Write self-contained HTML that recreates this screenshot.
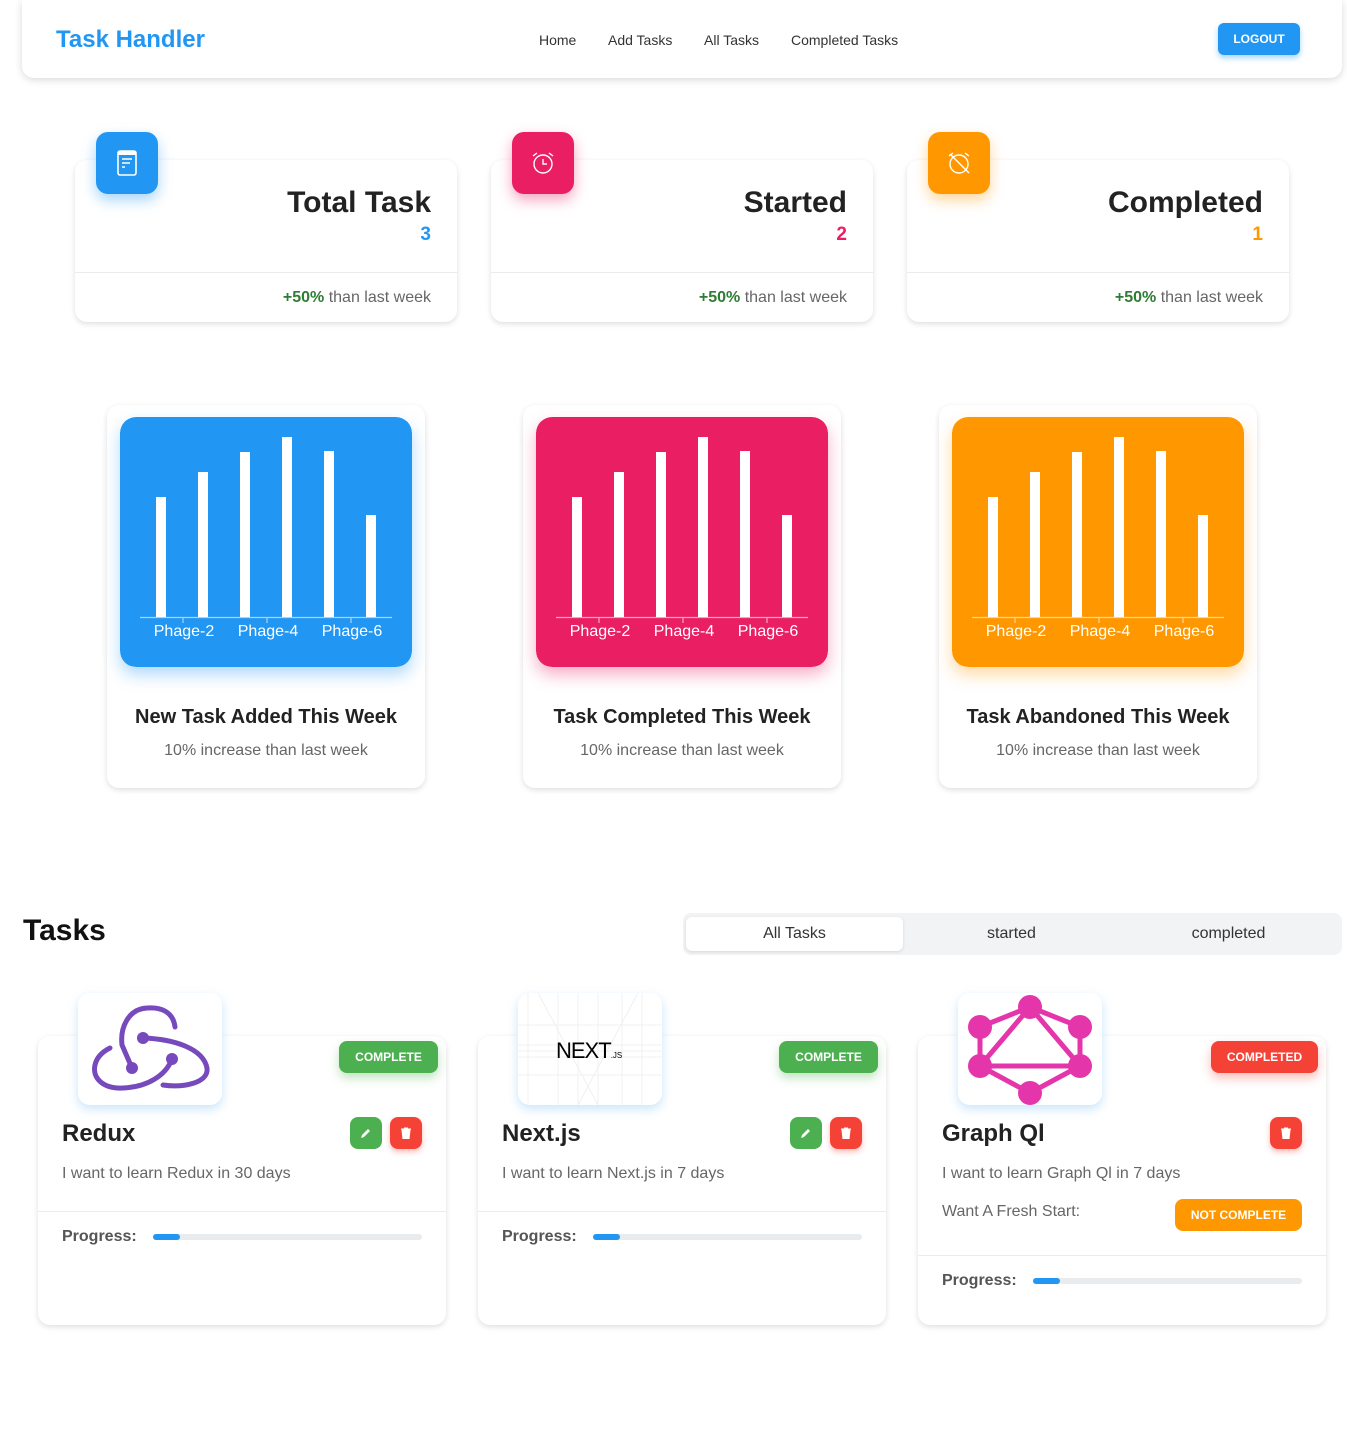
<!DOCTYPE html>
<html><head><meta charset="utf-8"><style>
*{box-sizing:border-box;margin:0;padding:0}
body{width:1347px;height:1449px;background:#fff;font-family:"Liberation Sans",Arial,sans-serif;position:relative;overflow:hidden;color:#222}
.a{position:absolute}
.nav{left:22px;top:0;width:1320px;height:78px;border-radius:0 0 12px 12px;box-shadow:0 2px 8px rgba(0,0,0,.15)}
.card{background:#fff;border-radius:12px;box-shadow:0 2px 6px rgba(0,0,0,.13)}
.ic{width:62px;height:62px;border-radius:12px;display:flex;align-items:center;justify-content:center}
.st{right:26px;font-size:30px;font-weight:bold;color:#222}
.hr{height:1px;background:#e9ecef;left:0;right:0}
.badge{color:#fff;font-size:12px;font-weight:bold;border-radius:8px;text-align:center;line-height:32px}
.btn{width:32px;height:32px;border-radius:8px;display:flex;align-items:center;justify-content:center}
</style></head><body>
<div class="a nav" style="background:#fff">
 <div class="a" style="left:34px;top:26px;font-size:24px;font-weight:bold;color:#2196f3">Task Handler</div>
 <div class="a" style="left:517px;top:32px;font-size:14px;color:#333">Home</div>
 <div class="a" style="left:586px;top:32px;font-size:14px;color:#333">Add Tasks</div>
 <div class="a" style="left:682px;top:32px;font-size:14px;color:#333">All Tasks</div>
 <div class="a" style="left:769px;top:32px;font-size:14px;color:#333">Completed Tasks</div>
 <div class="a" style="left:1196px;top:23px;width:82px;height:32px;background:#2196f3;border-radius:6px;color:#fff;font-size:12px;font-weight:bold;text-align:center;line-height:32px;box-shadow:0 3px 6px rgba(33,150,243,.4)">LOGOUT</div>
</div>

<div class="a card" style="left:75px;top:160px;width:382px;height:162px">
 <div class="a st" style="top:26px">Total Task</div>
 <div class="a" style="right:26px;top:64px;font-size:19px;font-weight:bold;color:#2196f3">3</div>
 <div class="a hr" style="top:112px"></div>
 <div class="a" style="right:26px;top:129px;font-size:16px;color:#666"><b style="color:#2e7d32">+50%</b> than last week</div>
</div>
<div class="a ic" style="left:96px;top:132px;background:#2196f3;box-shadow:0 6px 14px rgba(33,150,243,.4)">
 <svg width="22" height="26" viewBox="0 0 22 26"><rect x="2" y="1" width="18" height="24" rx="2" fill="none" stroke="#fff" stroke-width="1.6"/><rect x="2" y="1" width="18" height="4" fill="#fff"/><path d="M6 9h10M6 13h8M6 17h3" stroke="#fff" stroke-width="1.6"/></svg>
</div>
<div class="a card" style="left:491px;top:160px;width:382px;height:162px">
 <div class="a st" style="top:26px">Started</div>
 <div class="a" style="right:26px;top:64px;font-size:19px;font-weight:bold;color:#e91e63">2</div>
 <div class="a hr" style="top:112px"></div>
 <div class="a" style="right:26px;top:129px;font-size:16px;color:#666"><b style="color:#2e7d32">+50%</b> than last week</div>
</div>
<div class="a ic" style="left:512px;top:132px;background:#e91e63;box-shadow:0 6px 14px rgba(233,30,99,.4)">
 <svg width="26" height="26" viewBox="0 0 26 26" fill="none" stroke="#fff" stroke-width="1.4"><circle cx="13" cy="14" r="9"/><path d="M13 9v5h4M3 6l4-3M23 6l-4-3"/></svg>
</div>
<div class="a card" style="left:907px;top:160px;width:382px;height:162px">
 <div class="a st" style="top:26px">Completed</div>
 <div class="a" style="right:26px;top:64px;font-size:19px;font-weight:bold;color:#ff9800">1</div>
 <div class="a hr" style="top:112px"></div>
 <div class="a" style="right:26px;top:129px;font-size:16px;color:#666"><b style="color:#2e7d32">+50%</b> than last week</div>
</div>
<div class="a ic" style="left:928px;top:132px;background:#ff9800;box-shadow:0 6px 14px rgba(255,152,0,.4)">
 <svg width="26" height="26" viewBox="0 0 26 26" fill="none" stroke="#fff" stroke-width="1.4"><circle cx="13" cy="14" r="9"/><path d="M3 6l4-3M23 6l-4-3M4 4l19 19"/></svg>
</div>

<div class="a card" style="left:107px;top:405px;width:318px;height:383px;text-align:center">
 <div class="a" style="left:0;right:0;top:301px;font-size:20px;font-weight:bold">New Task Added This Week</div>
 <div class="a" style="left:0;right:0;top:337px;font-size:16px;color:#666">10% increase than last week</div>
</div>
<div class="a card" style="left:523px;top:405px;width:318px;height:383px;text-align:center">
 <div class="a" style="left:0;right:0;top:301px;font-size:20px;font-weight:bold">Task Completed This Week</div>
 <div class="a" style="left:0;right:0;top:337px;font-size:16px;color:#666">10% increase than last week</div>
</div>
<div class="a card" style="left:939px;top:405px;width:318px;height:383px;text-align:center">
 <div class="a" style="left:0;right:0;top:301px;font-size:20px;font-weight:bold">Task Abandoned This Week</div>
 <div class="a" style="left:0;right:0;top:337px;font-size:16px;color:#666">10% increase than last week</div>
</div>
<svg class="a" style="left:120px;top:417px;border-radius:16px;box-shadow:0 8px 16px rgba(33,150,243,.35)" width="292" height="250"><rect width="292" height="250" rx="16" fill="#2196f3"/><g fill="#fff"><rect x="36" y="80" width="10" height="120"/><rect x="78" y="55" width="10" height="145"/><rect x="120" y="35" width="10" height="165"/><rect x="162" y="20" width="10" height="180"/><rect x="204" y="34" width="10" height="166"/><rect x="246" y="98" width="10" height="102"/></g><path d="M20 200.5h252M63 200v6M147 200v6M231 200v6" stroke="rgba(255,255,255,.6)" stroke-width="1.2"/><g fill="#fff" font-family="Liberation Sans" font-size="16" text-anchor="middle"><text x="64" y="219">Phage-2</text><text x="148" y="219">Phage-4</text><text x="232" y="219">Phage-6</text></g></svg>
<svg class="a" style="left:536px;top:417px;border-radius:16px;box-shadow:0 8px 16px rgba(233,30,99,.35)" width="292" height="250"><rect width="292" height="250" rx="16" fill="#e91e63"/><g fill="#fff"><rect x="36" y="80" width="10" height="120"/><rect x="78" y="55" width="10" height="145"/><rect x="120" y="35" width="10" height="165"/><rect x="162" y="20" width="10" height="180"/><rect x="204" y="34" width="10" height="166"/><rect x="246" y="98" width="10" height="102"/></g><path d="M20 200.5h252M63 200v6M147 200v6M231 200v6" stroke="rgba(255,255,255,.6)" stroke-width="1.2"/><g fill="#fff" font-family="Liberation Sans" font-size="16" text-anchor="middle"><text x="64" y="219">Phage-2</text><text x="148" y="219">Phage-4</text><text x="232" y="219">Phage-6</text></g></svg>
<svg class="a" style="left:952px;top:417px;border-radius:16px;box-shadow:0 8px 16px rgba(255,152,0,.35)" width="292" height="250"><rect width="292" height="250" rx="16" fill="#ff9800"/><g fill="#fff"><rect x="36" y="80" width="10" height="120"/><rect x="78" y="55" width="10" height="145"/><rect x="120" y="35" width="10" height="165"/><rect x="162" y="20" width="10" height="180"/><rect x="204" y="34" width="10" height="166"/><rect x="246" y="98" width="10" height="102"/></g><path d="M20 200.5h252M63 200v6M147 200v6M231 200v6" stroke="rgba(255,255,255,.6)" stroke-width="1.2"/><g fill="#fff" font-family="Liberation Sans" font-size="16" text-anchor="middle"><text x="64" y="219">Phage-2</text><text x="148" y="219">Phage-4</text><text x="232" y="219">Phage-6</text></g></svg>

<div class="a" style="left:23px;top:914px;font-size:30px;font-weight:bold;color:#111">Tasks</div>
<div class="a" style="left:683px;top:913px;width:659px;height:42px;background:#f1f3f5;border-radius:8px">
 <div class="a" style="left:3px;top:4px;width:217px;height:34px;background:#fff;border-radius:6px;box-shadow:0 1px 3px rgba(0,0,0,.12)"></div>
 <div class="a" style="left:3px;width:217px;top:12px;text-align:center;font-size:16px;color:#333">All Tasks</div>
 <div class="a" style="left:220px;width:217px;top:12px;text-align:center;font-size:16px;color:#333">started</div>
 <div class="a" style="left:437px;width:217px;top:12px;text-align:center;font-size:16px;color:#333">completed</div>
</div>

<div class="a card" style="left:38px;top:1036px;width:408px;height:289px">
 <div class="a" style="left:24px;top:84px;font-size:24px;font-weight:bold">Redux</div>
 <div class="a" style="left:24px;top:129px;font-size:16px;color:#666">I want to learn Redux in 30 days</div>
 <div class="a hr" style="top:175px"></div>
 <div class="a" style="left:24px;top:192px;font-size:16px;font-weight:bold;color:#555">Progress:</div>
 <div class="a" style="left:115px;top:198px;width:269px;height:6px;background:#e9ecef;border-radius:3px"><div style="width:27px;height:6px;background:#2196f3;border-radius:3px"></div></div>
</div>
<div class="a badge" style="left:339px;top:1041px;width:99px;background:#4caf50;box-shadow:0 5px 10px rgba(76,175,80,.35)">COMPLETE</div>
<div class="a btn" style="left:350px;top:1117px;background:#4caf50"><svg width="12" height="12" viewBox="0 0 12 12"><path d="M1 11l1-3 6-6 2 2-6 6z" fill="#fff"/></svg></div>
<div class="a btn" style="left:390px;top:1117px;background:#f44336;box-shadow:0 3px 6px rgba(244,67,54,.35)"><svg width="10" height="12" viewBox="0 0 10 12"><path d="M0 2h10M3 1h4M1 3h8l-1 9H2z" fill="#fff" stroke="#fff"/></svg></div>
<div class="a card" style="left:78px;top:993px;width:144px;height:112px;box-shadow:0 4px 10px rgba(33,150,243,.25)">
 <svg class="a" style="left:0;top:0" width="144" height="112" fill="none" stroke="#764abc" stroke-width="5" stroke-linecap="round"><path d="M97 34C95 18 82 14 69 15C50 16 42 35 44 52L54 75"/><path d="M65 45C95 46 125 55 129 75C131 90 105 95 85 92"/><path d="M94 66C88 82 70 94 45 95C25 96 14 85 17 72C19 63 26 58 32 55"/><g fill="#764abc" stroke="none"><circle cx="65" cy="45" r="6"/><circle cx="54" cy="75" r="6"/><circle cx="94" cy="66" r="6"/></g></svg>
</div>

<div class="a card" style="left:478px;top:1036px;width:408px;height:289px">
 <div class="a" style="left:24px;top:84px;font-size:24px;font-weight:bold">Next.js</div>
 <div class="a" style="left:24px;top:129px;font-size:16px;color:#666">I want to learn Next.js in 7 days</div>
 <div class="a hr" style="top:175px"></div>
 <div class="a" style="left:24px;top:192px;font-size:16px;font-weight:bold;color:#555">Progress:</div>
 <div class="a" style="left:115px;top:198px;width:269px;height:6px;background:#e9ecef;border-radius:3px"><div style="width:27px;height:6px;background:#2196f3;border-radius:3px"></div></div>
</div>
<div class="a badge" style="left:779px;top:1041px;width:99px;background:#4caf50;box-shadow:0 5px 10px rgba(76,175,80,.35)">COMPLETE</div>
<div class="a btn" style="left:790px;top:1117px;background:#4caf50"><svg width="12" height="12" viewBox="0 0 12 12"><path d="M1 11l1-3 6-6 2 2-6 6z" fill="#fff"/></svg></div>
<div class="a btn" style="left:830px;top:1117px;background:#f44336;box-shadow:0 3px 6px rgba(244,67,54,.35)"><svg width="10" height="12" viewBox="0 0 10 12"><path d="M0 2h10M3 1h4M1 3h8l-1 9H2z" fill="#fff" stroke="#fff"/></svg></div>
<div class="a card" style="left:518px;top:993px;width:144px;height:112px;overflow:hidden;box-shadow:0 4px 10px rgba(33,150,243,.25)">
 <svg class="a" style="left:0;top:0" width="144" height="112" stroke="#f0f0f0" stroke-width="1" fill="none"><path d="M10 0v112M40 0v112M60 0v112M80 0v112M104 0v112M124 0v112M0 32h144M0 52h144M0 58h144M0 64h144M0 82h144M20 0l60 112M120 0L60 112"/></svg>
 <div class="a" style="left:38px;top:45px;font-size:22px;color:#000;letter-spacing:-1px">NEXT<span style="font-size:8px;letter-spacing:0">.JS</span></div>
</div>

<div class="a card" style="left:918px;top:1036px;width:408px;height:289px">
 <div class="a" style="left:24px;top:84px;font-size:24px;font-weight:bold">Graph Ql</div>
 <div class="a" style="left:24px;top:129px;font-size:16px;color:#666">I want to learn Graph Ql in 7 days</div>
 <div class="a" style="left:24px;top:167px;font-size:16px;color:#666">Want A Fresh Start:</div>
 <div class="a badge" style="left:257px;top:163px;width:127px;background:#ff9800">NOT COMPLETE</div>
 <div class="a hr" style="top:219px"></div>
 <div class="a" style="left:24px;top:236px;font-size:16px;font-weight:bold;color:#555">Progress:</div>
 <div class="a" style="left:115px;top:242px;width:269px;height:6px;background:#e9ecef;border-radius:3px"><div style="width:27px;height:6px;background:#2196f3;border-radius:3px"></div></div>
</div>
<div class="a badge" style="left:1211px;top:1041px;width:107px;background:#f44336;box-shadow:0 5px 10px rgba(244,67,54,.35)">COMPLETED</div>
<div class="a btn" style="left:1270px;top:1117px;background:#f44336;box-shadow:0 3px 6px rgba(244,67,54,.35)"><svg width="10" height="12" viewBox="0 0 10 12"><path d="M0 2h10M3 1h4M1 3h8l-1 9H2z" fill="#fff" stroke="#fff"/></svg></div>
<div class="a card" style="left:958px;top:993px;width:144px;height:112px;box-shadow:0 4px 10px rgba(33,150,243,.25)">
 <svg class="a" style="left:0;top:0" width="144" height="112" fill="#e535ab" stroke="#e535ab" stroke-width="5"><path d="M72 14L122 73H22z" fill="none"/><path d="M72 14L22 34V73L72 100L122 73V34z" fill="none"/><g stroke="none"><circle cx="72" cy="14" r="12"/><circle cx="22" cy="34" r="12"/><circle cx="122" cy="34" r="12"/><circle cx="22" cy="73" r="12"/><circle cx="122" cy="73" r="12"/><circle cx="72" cy="100" r="12"/></g></svg>
</div>
</body></html>
